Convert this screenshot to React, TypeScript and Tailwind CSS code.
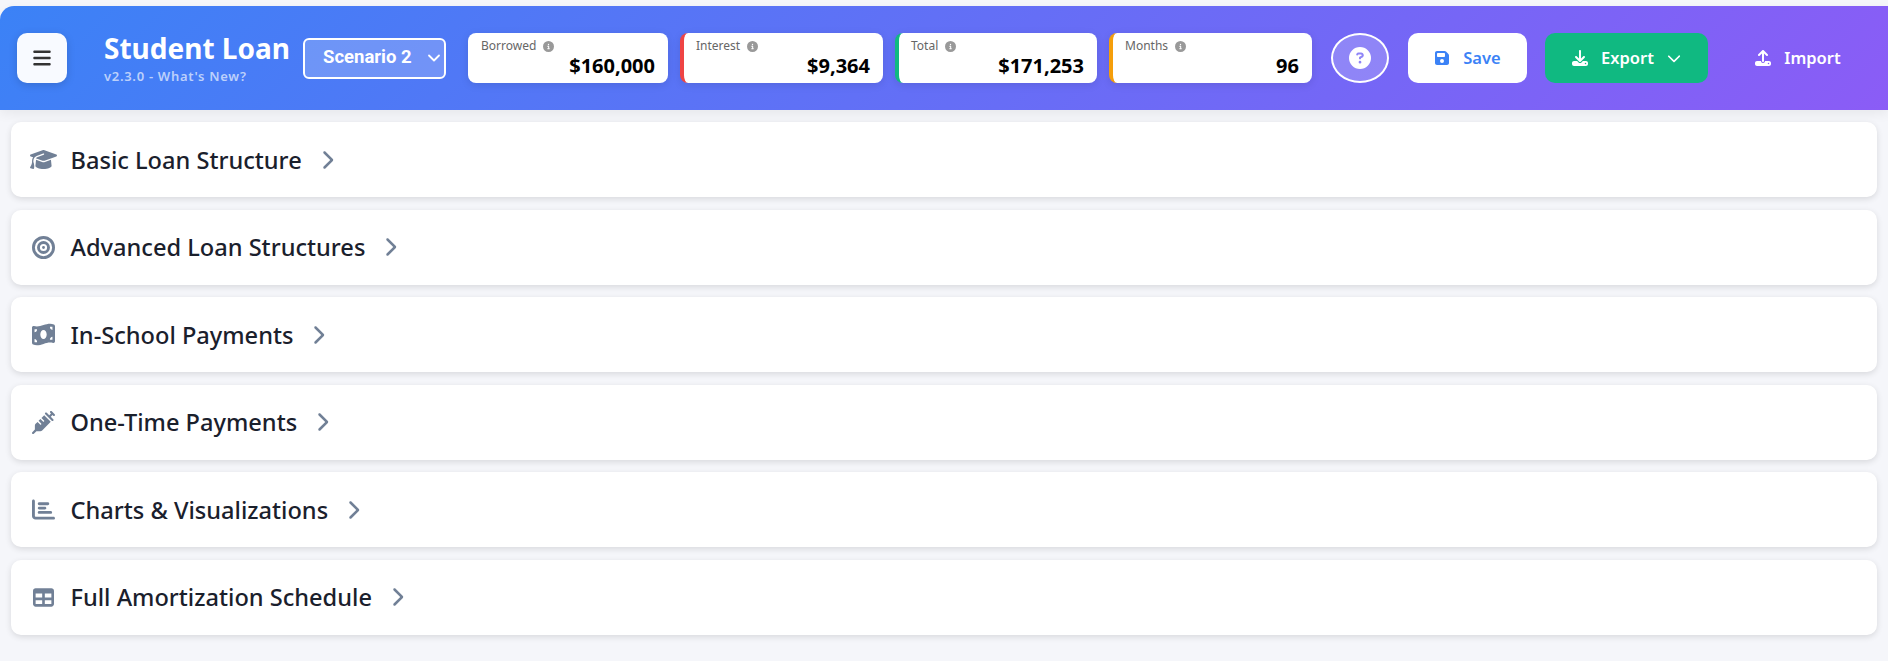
import { ChevronDown } from 'lucide-react';
import {
  FaBars,
  FaBullseye,
  FaChartBar,
  FaChevronDown,
  FaChevronRight,
  FaCircleInfo,
  FaCircleQuestion,
  FaDownload,
  FaFloppyDisk,
  FaGraduationCap,
  FaMoneyBillWave,
  FaSyringe,
  FaTable,
  FaUpload,
} from 'react-icons/fa6';

const stats = [
  { label: 'Borrowed', value: '$160,000', accent: 'pl-[13px]', width: 'w-[200px]' },
  { label: 'Interest', value: '$9,364', accent: 'border-l-[4px] border-l-[#ef4444] pl-[12px]', width: 'w-[203px]' },
  { label: 'Total', value: '$171,253', accent: 'border-l-[4px] border-l-[#10b981] pl-[12px]', width: 'w-[202px]' },
  { label: 'Months', value: '96', accent: 'border-l-[4px] border-l-[#f59e0b] pl-[12px]', width: 'w-[203px]' },
];

const sections = [
  { title: 'Basic Loan Structure', icon: <FaGraduationCap size={27} /> },
  { title: 'Advanced Loan Structures', icon: <FaBullseye size={23} /> },
  { title: 'In-School Payments', icon: <FaMoneyBillWave size={23} className="scale-y-[1.2]" /> },
  { title: 'One-Time Payments', icon: <FaSyringe size={23} /> },
  { title: 'Charts & Visualizations', icon: <FaChartBar size={23} /> },
  { title: 'Full Amortization Schedule', icon: <FaTable size={21} /> },
];

export default function App() {
  return (
    <div className="min-h-[661px] bg-[#f5f6fa] pt-[6px] font-['Noto_Sans',sans-serif]">
      <header className="flex h-[104px] items-center rounded-tl-[14px] bg-[linear-gradient(135deg,#3b82f6,#8b5cf6)] pl-[17px] shadow-[0_4px_12px_rgba(0,0,0,0.06)]">
        <button className="flex h-[50px] w-[50px] items-center justify-center rounded-[10px] bg-[#f8faff] text-[#333] shadow-[0_2px_8px_rgba(0,0,0,0.15)]">
          <FaBars size={20} />
        </button>

        <div className="ml-[37px] flex w-[199px] flex-col">
          <span className="whitespace-nowrap text-[28px] leading-[32px] font-bold text-white">Student Loan</span>
          <span className="mt-[4px] text-[13px] leading-[17px] font-semibold tracking-[0.7px] text-[#bcd0fb]">v2.3.0 - What's New?</span>
        </div>

        <div className="relative flex h-[41px] w-[143px] items-center rounded-[6px] border-2 border-white bg-white/20 pl-[18px] font-['Roboto',sans-serif] text-[18.5px] font-bold text-white">
          Scenario 2
          <ChevronDown size={20} strokeWidth={2.2} className="absolute right-0 top-[8px]" />
        </div>

        <div className="ml-[22px] flex gap-[12px]">
          {stats.map((s) => (
            <div
              key={s.label}
              className={`flex h-[50px] ${s.width} flex-col rounded-[8px] ${s.accent} bg-white pr-[13px] shadow-[0_2px_8px_rgba(0,0,0,0.1)]`}
            >
              <div className="mt-[5px] flex h-[16px] items-center gap-[7px] text-[12px] text-[#666]">
                {s.label}
                <FaCircleInfo size={11} className="text-[#999]" />
              </div>
              <div className="text-right text-[20px] leading-[24px] font-bold text-black">{s.value}</div>
            </div>
          ))}
        </div>

        <button className="ml-[19px] flex h-[50px] w-[58px] items-center justify-center rounded-[50%] border-2 border-white bg-white/20 text-white">
          <FaCircleQuestion size={22} />
        </button>

        <button className="ml-[19px] flex h-[50px] w-[119px] items-center justify-center gap-[13px] rounded-[10px] bg-white text-[16.5px] font-semibold text-[#3b82f6]">
          <FaFloppyDisk size={16} />
          Save
        </button>

        <button className="ml-[18px] flex h-[50px] w-[163px] items-center justify-center gap-[13px] rounded-[10px] bg-[#10b981] text-[16.5px] font-semibold text-white">
          <FaDownload size={16} />
          Export
          <FaChevronDown size={14} />
        </button>

        <button className="ml-[17px] flex h-[50px] w-[146px] items-center justify-center gap-[13px] rounded-[10px] text-[16.5px] font-semibold text-white">
          <FaUpload size={16} />
          Import
        </button>
      </header>

      <main className="mx-[11px] mt-[12px] flex flex-col gap-[12.5px]">
        {sections.map((s) => (
          <section
            key={s.title}
            className="flex h-[75px] items-center rounded-[10px] bg-white pl-[17px] shadow-[0_2px_6px_rgba(0,0,0,0.12)]"
          >
            <span className="flex w-[31px] justify-center text-[#718096]">{s.icon}</span>
            <h2 className="ml-[11.5px] pt-[2px] text-[23.6px] font-medium text-[#1a202c]">{s.title}</h2>
            <FaChevronRight size={20} className="ml-[15px] text-[#718096]" />
          </section>
        ))}
      </main>
    </div>
  );
}
